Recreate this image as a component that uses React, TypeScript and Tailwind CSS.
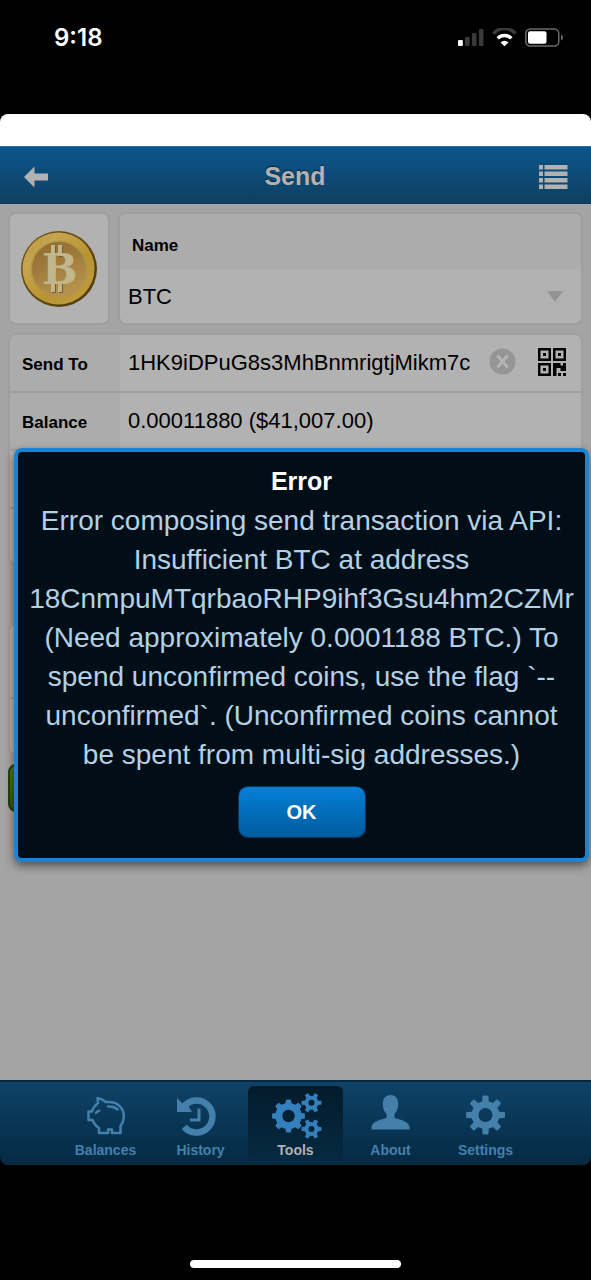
import React from "react";

const TEETH_EIGHT = 8;
const TEETH_SIX = 6;

function gearPath(cx: number, cy: number, outer: number, root: number, hole: number, teeth: number) {
  const step = (Math.PI * 2) / teeth;
  const pt = (r: number, a: number) => `${(cx + r * Math.cos(a)).toFixed(2)} ${(cy + r * Math.sin(a)).toFixed(2)}`;
  let d = "";
  for (let i = 0; i < teeth; i++) {
    const a = i * step;
    d += `${i === 0 ? "M" : "L"}${pt(root, a - step * 0.3)}`;
    d += `L${pt(outer, a - step * 0.19)}A${outer} ${outer} 0 0 1 ${pt(outer, a + step * 0.19)}`;
    d += `L${pt(root, a + step * 0.3)}A${root} ${root} 0 0 1 ${pt(root, a + step * 0.7)}`;
  }
  return `${d}ZM${cx - hole} ${cy}a${hole} ${hole} 0 1 0 ${hole * 2} 0a${hole} ${hole} 0 1 0 ${-hole * 2} 0Z`;
}

function StatusIcons() {
  return (
    <svg width="108" height="20" viewBox="0 0 108 20" aria-hidden="true">
      <rect x="1" y="12" width="4.800" height="6" rx="1" fill="#fff" />
      <g fill="#3a3a3a">
        <rect x="8" y="9" width="4.500" height="9" rx="1" />
        <rect x="15" y="5" width="4.500" height="13" rx="1" />
        <rect x="22" y="1" width="4.500" height="17" rx="1" />
      </g>
      <path d="M36.500 5.600a14.500 14.500 0 0 1 22 0" fill="none" stroke="#3a3a3a" strokeWidth="3.400" />
      <path d="M40.700 10.400a9.500 9.500 0 0 1 13.600 0" fill="none" stroke="#fff" strokeWidth="3.400" />
      <path d="M43.500 14.400a5.500 5.500 0 0 1 8 0L47.500 18.300z" fill="#fff" />
      <rect x="68.800" y="1" width="33" height="17" rx="4.500" fill="none" stroke="#6a6a6a" strokeWidth="1.500" />
      <rect x="71" y="3.200" width="18.500" height="12.600" rx="2" fill="#fff" />
      <path d="M104 6.500c2.600 1 2.600 5 0 6z" fill="#6a6a6a" />
    </svg>
  );
}

function BitcoinCoin() {
  return (
    <svg width="78" height="78" viewBox="0 0 78 78" role="img" aria-label="Bitcoin">
      <defs>
        <linearGradient id="rim" x1="0" y1="0" x2="1" y2="1">
          <stop offset="0" stopColor="#75561c" />
          <stop offset="1" stopColor="#4e3a0d" />
        </linearGradient>
        <linearGradient id="ring" x1="0" y1="0" x2="1" y2="1">
          <stop offset="0" stopColor="#b28f36" />
          <stop offset="0.25" stopColor="#c4a650" />
          <stop offset="0.6" stopColor="#b9952f" />
          <stop offset="0.85" stopColor="#bd9a3c" />
          <stop offset="1" stopColor="#7d5f18" />
        </linearGradient>
        <linearGradient id="face" x1="0" y1="0" x2="0.4" y2="1">
          <stop offset="0" stopColor="#8c6a2c" />
          <stop offset="0.5" stopColor="#9f7c3c" />
          <stop offset="1" stopColor="#b4924d" />
        </linearGradient>
      </defs>
      <circle cx="39" cy="39" r="38" fill="url(#rim)" />
      <circle cx="38.500" cy="38.500" r="36" fill="url(#ring)" />
      <circle cx="39" cy="39" r="28.500" fill="#b3934a" />
      <circle cx="39" cy="39" r="27" fill="url(#face)" />
      <g fill="#765a28" transform="translate(1 1)">
        <rect x="31" y="15" width="4" height="11" />
        <rect x="38" y="15" width="4" height="11" />
        <rect x="31" y="51" width="4" height="11" />
        <rect x="38" y="51" width="4" height="11" />
      </g>
      <g fill="#c2b78c">
        <rect x="31" y="15" width="4" height="11" />
        <rect x="38" y="15" width="4" height="11" />
        <rect x="31" y="51" width="4" height="11" />
        <rect x="38" y="51" width="4" height="11" />
        <text x="22" y="54" fontSize="42" fontWeight="700" fontFamily="DejaVu Serif, serif">B</text>
      </g>
    </svg>
  );
}

function QrIcon() {
  return (
    <svg width="28" height="28" viewBox="0 0 28 28" fill="#050505" fillRule="evenodd" aria-hidden="true">
      <path d="M0 0h13v13H0zM2.500 2.500v8h8v-8zM5 5h3v3H5z" />
      <path d="M15 0h13v13H15zM17.500 2.500v8h8v-8zM20 5h3v3h-3z" />
      <path d="M0 15h13v13H0zM2.500 17.500v8h8v-8zM5 20h3v3H5z" />
      <path d="M15 15h7.500v2.500h2.500V15h3v8h-5.500v-3h-4v8H15zM20 25h3v3h-3zM25 25h3v3h-3z" />
    </svg>
  );
}

function PiggyIcon() {
  return (
    <svg width="48" height="48" viewBox="0 0 48 48" fill="none" stroke="currentColor" strokeWidth="2.500" strokeLinejoin="round" aria-hidden="true">
      <path d="M15.500 7l.5 5c-3 2.300-5 5-6 8.500H6.500V29h4c1.300 3.500 3.500 6 6.500 8v5h9v-3.500h4V42h8.500v-7c2-2.500 3.300-6 3.300-10 0-8.500-6.500-14-15-14h-3C21.500 9 19 7.500 15.500 7z" />
      <path d="M26 15.500c4-.4 7.200.7 9.700 3" strokeLinecap="round" />
      <path d="M14 22c.6-1.200 1.700-2 3.200-2.300" strokeLinecap="round" />
    </svg>
  );
}

function HistoryIcon() {
  return (
    <svg width="48" height="48" viewBox="0 0 48 48" fill="none" stroke="currentColor" aria-hidden="true">
      <path d="M7.200 15.200a16 16 0 1 1 0 20.600" strokeWidth="6.500" />
      <path d="M0 7l5.500 5.500L9 11l6 10H0z" fill="currentColor" stroke="none" />
      <path d="M22 17.500v11.500h-9" strokeWidth="3" />
    </svg>
  );
}

function ToolsIcon() {
  return (
    <svg width="54" height="48" viewBox="0 0 54 48" fill="currentColor" fillRule="evenodd" aria-hidden="true">
      <path d={gearPath(19.500, 25, 16.500, 13.200, 6.200, TEETH_EIGHT)} />
      <path d={gearPath(42.500, 11.800, 10, 7, 3, TEETH_SIX)} />
      <path d={gearPath(42.500, 38, 10, 7, 3, TEETH_SIX)} />
    </svg>
  );
}

function AboutIcon() {
  return (
    <svg width="48" height="48" viewBox="0 0 48 48" fill="currentColor" aria-hidden="true">
      <path d="M23.500 4c5 0 7.700 3.600 7.700 9 0 4-1.200 7.500-3.700 10v4c7 1.500 15 4.500 15 9v2.500h-38V36c0-4.500 8-7.500 15-9v-4c-2.500-2.500-3.700-6-3.700-10 0-5.400 2.700-9 7.700-9z" />
    </svg>
  );
}

function SettingsIcon() {
  return (
    <svg width="48" height="48" viewBox="0 0 48 48" fill="currentColor" fillRule="evenodd" aria-hidden="true">
      <path d={gearPath(23.500, 24, 19.500, 14, 7, TEETH_EIGHT)} />
    </svg>
  );
}

const tabs = [
  { name: "Balances", icon: <PiggyIcon /> },
  { name: "History", icon: <HistoryIcon /> },
  { name: "Tools", icon: <ToolsIcon />, active: true },
  { name: "About", icon: <AboutIcon /> },
  { name: "Settings", icon: <SettingsIcon /> },
];

const card = "rounded-lg border-2 border-[#9f9f9f] bg-[#b2b2b2] overflow-hidden";
const rowLabel = "flex w-[110px] shrink-0 items-center bg-[#acacac] pl-3 pt-1 text-[17px] font-bold";

function ErrorDialog() {
  return (
    <div
      role="alertdialog"
      aria-labelledby="error-title"
      aria-describedby="error-text"
      className="absolute top-[244px] right-[2px] left-[14px] flex flex-col items-center rounded-lg border-4 border-[#1c82d2] bg-[#020e17] px-[11px] pt-[15px] pb-5 shadow-[0_4px_10px_rgba(0,0,0,0.5)]"
    >
      <h2 id="error-title" className="text-[25px] leading-[28px] font-bold text-white">Error</h2>
      <p id="error-text" className="w-full overflow-hidden pt-[6px] text-center text-[28px] leading-[39px] text-[#b3d0e4]">
        Error composing send transaction via API: Insufficient BTC at address 18CnmpuMTqrbaoRHP9ihf3Gsu4hm2CZMr (Need
        approximately 0.0001188 BTC.) To spend unconfirmed coins, use the flag `--unconfirmed`. (Unconfirmed coins cannot
        be spent from multi-sig addresses.)
      </p>
      <button
        type="button"
        className="mt-3 h-[52px] w-[128px] rounded-[10px] border border-[#02345c] bg-linear-to-b from-[#0580d6] to-[#015ca0] text-[20px] font-bold text-white"
      >
        OK
      </button>
    </div>
  );
}

export default function App() {
  return (
    <div className="flex min-h-screen flex-col bg-black font-['Liberation_Sans',Arial,sans-serif] text-black">
      <div className="flex h-[114px] shrink-0 items-start justify-between pt-6 pr-[26px] pl-[54px]">
        <span className="font-['Inter',sans-serif] text-[24px] leading-[28px] font-semibold text-white">9:18</span>
        <div className="pt-1"><StatusIcons /></div>
      </div>
      <div className="h-8 shrink-0 rounded-t-lg bg-white" />

      <header className="flex h-[58px] shrink-0 items-center justify-between border-t border-b border-t-[#2b709d] border-b-[#0a3a5b] bg-linear-to-b from-[#0a568c] to-[#0f4061] pt-[3px] pr-[23px] pl-6 text-[#b2b2b2]">
        <button type="button" aria-label="Back" className="flex h-10 w-7 items-center">
          <svg width="24" height="24" viewBox="0 0 24 24" fill="currentColor" aria-hidden="true">
            <path d="M0 12L10.500 1.500V8.500H24v7H10.500v7z" />
          </svg>
        </button>
        <h1 className="text-[25px] font-bold [text-shadow:0_-1px_1px_#06263d]">Send</h1>
        <button type="button" aria-label="Menu" className="flex h-10 w-[30px] items-center">
          <svg width="30" height="24" viewBox="0 0 30 24" fill="currentColor" aria-hidden="true">
            <path d="M1 0h4v4.500H1zM6.500 0H29.500v4.500H6.500zM1 6.500h4V11H1zM6.500 6.500H29.500V11H6.500zM1 13h4v4.500H1zM6.500 13H29.500v4.500H6.500zM1 19.500h4V24H1zM6.500 19.500H29.500V24H6.500z" />
          </svg>
        </button>
      </header>

      <main className="relative flex-1 bg-[#a4a4a4] px-2 pt-2">
        <div className="flex gap-2">
          <div className={`${card} flex h-[113px] w-[102px] shrink-0 items-center justify-center`}>
            <BitcoinCoin />
          </div>
          <div className={`${card} flex h-[113px] flex-1 flex-col`}>
            <label htmlFor="asset" className="flex h-[55px] items-center bg-[#acacac] pt-2 pl-3 text-[17px] font-bold">Name</label>
            <div className="flex flex-1 items-center justify-between pr-[18px] pl-2">
              <select id="asset" defaultValue="BTC" className="h-10 flex-1 appearance-none bg-transparent text-[22px]">
                <option>BTC</option>
              </select>
              <svg width="16" height="11" viewBox="0 0 16 11" fill="#949494" aria-hidden="true"><path d="M0 0h16L8 11z" /></svg>
            </div>
          </div>
        </div>

        <div className={`${card} mt-2`}>
          <div className="flex h-[58px] border-b-2 border-[#9f9f9f]">
            <label htmlFor="send-to" className={rowLabel}>Send To</label>
            <input id="send-to" type="text" defaultValue="1HK9iDPuG8s3MhBnmrigtjMikm7c" className="ml-2 min-w-0 flex-1 bg-transparent pb-[2px] text-[22px]" />
            <button type="button" aria-label="Clear" className="mx-[18px] flex items-center pb-[3px]">
              <svg width="27" height="27" viewBox="0 0 27 27" aria-hidden="true">
                <circle cx="13.500" cy="13.500" r="13" fill="#959595" />
                <path d="M8.300 7.500l10.400 12M18.700 7.500l-10.400 12" stroke="#b4b4b4" strokeWidth="3" />
              </svg>
            </button>
            <button type="button" aria-label="Scan QR code" className="mr-[15px] ml-1 flex items-center pb-[2px]">
              <QrIcon />
            </button>
          </div>
          <div className="flex h-[58px] border-b-2 border-[#9f9f9f]">
            <span className={rowLabel}>Balance</span>
            <span className="flex items-center pb-[2px] pl-2 text-[22px]">0.00011880 ($41,007.00)</span>
          </div>
          <div className="h-[58px] border-b-2 border-[#9f9f9f]" />
          <div className="h-[54px]" />
        </div>
        <div className={`${card} mt-[58px] h-[133px]`}>
          <div className="h-[74px] border-b-2 border-[#9f9f9f]" />
        </div>
        <div className="mt-2 h-12 rounded-lg border-2 border-[#25420b] bg-linear-to-b from-[#4c7b0c] to-[#315704]" />

        <ErrorDialog />
      </main>

      <nav className="flex h-[85px] shrink-0 justify-center rounded-b-lg border-t-2 border-[#07283f] bg-linear-to-b from-[#0f4268] to-[#052a44] pt-1 pb-1">
        {tabs.map((tab) => (
          <a
            key={tab.name}
            href={`#${tab.name.toLowerCase()}`}
            aria-current={tab.active ? "page" : undefined}
            className={
              tab.active
                ? "flex w-[95px] flex-col items-center rounded-md bg-linear-to-b from-[#041b2b] to-[#052a42] pt-[5px] text-[#3480bd]"
                : "flex w-[95px] flex-col items-center pt-[5px] text-[#4580aa]"
            }
          >
            {tab.icon}
            <span className={tab.active ? "pt-px text-[14px] leading-[20px] font-bold text-[#b2b2b2]" : "pt-px text-[14px] leading-[20px] font-bold"}>
              {tab.name}
            </span>
          </a>
        ))}
      </nav>

      <div className="flex h-[115px] shrink-0 items-end justify-center pb-3">
        <div className="h-2 w-[211px] rounded-full bg-white" />
      </div>
    </div>
  );
}
